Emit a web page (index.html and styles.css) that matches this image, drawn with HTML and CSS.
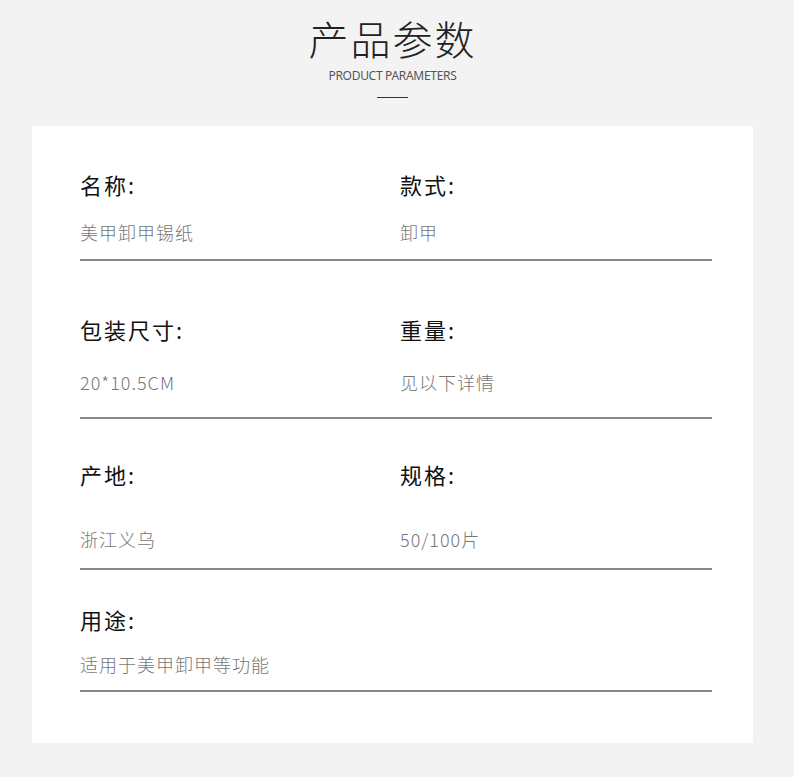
FILE: index.html
```html
<!DOCTYPE html>
<html lang="zh-CN">
<head>
    <meta charset="UTF-8">
    <meta name="viewport" content="width=device-width, initial-scale=1.0">
    <title>产品参数</title>
    <link rel="stylesheet" href="styles.css">
</head>
<body>
    <div class="page">
        <div class="header">
            <h1 class="title">产品参数</h1>
            <p class="subtitle">PRODUCT PARAMETERS</p>
            <div class="dash"></div>
        </div>

        <div class="card">
            <div class="row row-1">
                <div class="cell">
                    <div class="label">名称:</div>
                    <div class="value">美甲卸甲锡纸</div>
                </div>
                <div class="cell">
                    <div class="label">款式:</div>
                    <div class="value">卸甲</div>
                </div>
            </div>
            <div class="row row-2">
                <div class="cell">
                    <div class="label">包装尺寸:</div>
                    <div class="value">20*10.5CM</div>
                </div>
                <div class="cell">
                    <div class="label">重量:</div>
                    <div class="value">见以下详情</div>
                </div>
            </div>
            <div class="row row-3">
                <div class="cell">
                    <div class="label">产地:</div>
                    <div class="value">浙江义乌</div>
                </div>
                <div class="cell">
                    <div class="label">规格:</div>
                    <div class="value">50/100片</div>
                </div>
            </div>
            <div class="row row-4">
                <div class="cell">
                    <div class="label">用途:</div>
                    <div class="value">适用于美甲卸甲等功能</div>
                </div>
            </div>
        </div>
    </div>
</body>
</html>
```

FILE: styles.css
```css
body {
    margin: 0;
    background-color: #fff;
    font-family: "Noto Sans CJK SC", "Noto Sans", sans-serif;
    color: #1a1a1a;
}

.page {
    width: 794px;
    height: 777px;
    background-color: #f3f3f3;
    padding-left: 32px;
    box-sizing: border-box;
    overflow: hidden;
}

/* heading block */
.header {
    width: 721px;
    display: flex;
    flex-direction: column;
    align-items: center;
}

.title {
    margin: 14px 0 0;
    font-size: 40px;
    font-weight: 300;
    line-height: 48px;
    letter-spacing: 2px;
    color: #222;
}

.subtitle {
    margin: 7px 0 0;
    font-family: "Noto Sans", sans-serif;
    font-size: 12px;
    line-height: 14px;
    letter-spacing: -0.3px;
    color: #555;
}

.dash {
    width: 31px;
    height: 1px;
    margin-top: 14px;
    background-color: #333;
}

/* parameter card */
.card {
    width: 721px;
    margin-top: 28px;
    padding: 47px 41px 51px 48px;
    box-sizing: border-box;
    background-color: #fff;
}

.row {
    display: grid;
    grid-template-columns: 320px 1fr;
    border-bottom: 2px solid #888;
}

.label {
    font-size: 22px;
    line-height: 1;
    letter-spacing: 2px;
    color: #111;
}

.value {
    font-size: 18px;
    font-weight: 300;
    line-height: 1;
    letter-spacing: 1px;
    color: #777;
}

.row-1 { padding-bottom: 18px; }
.row-1 .value { margin-top: 28px; }

.row-2 { margin-top: 57px; padding-bottom: 26px; }
.row-2 .value { margin-top: 33px; }

.row-3 { margin-top: 44px; padding-bottom: 20px; }
.row-3 .value { margin-top: 45px; }

.row-4 { margin-top: 38px; padding-bottom: 17px; }
.row-4 .value { margin-top: 25px; }
```
